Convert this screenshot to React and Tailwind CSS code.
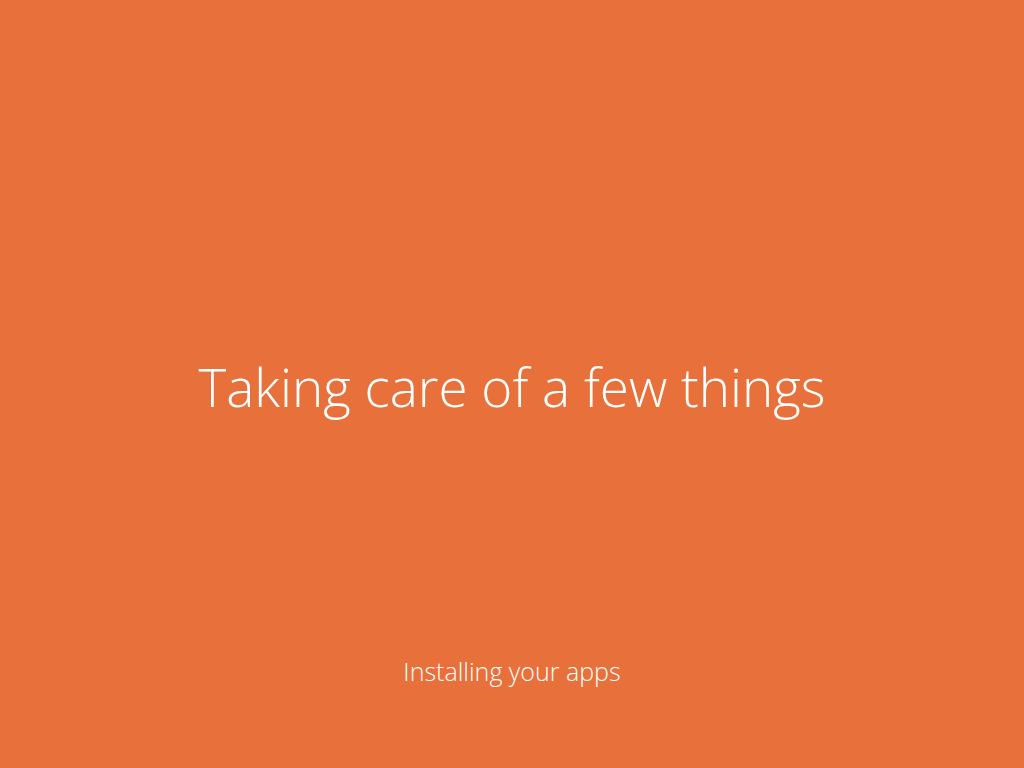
export default function App() {
  return (
    <div
      className="w-full h-screen bg-[#e8703a] text-white flex flex-col items-center overflow-hidden"
      style={{ fontFamily: '"Open Sans", "Noto Sans", sans-serif' }}
    >
      {/* Main message */}
      <div className="flex-1 flex items-center justify-center pt-[114px]">
        <h1 className="text-[53px] font-light leading-none tracking-normal">
          Taking care of a few things
        </h1>
      </div>

      {/* Status */}
      <div className="pb-[84px] text-[25px] font-light leading-none">
        Installing your apps
      </div>
    </div>
  )
}
